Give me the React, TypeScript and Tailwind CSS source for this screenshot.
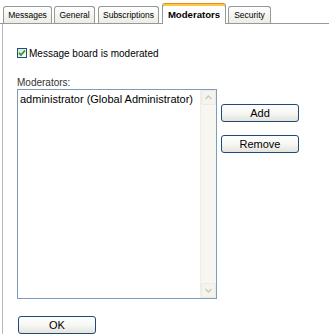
import React from "react";

const tabFont = { fontFamily: '"Liberation Sans", Arial, sans-serif' };

function Tab({ label, active, w, ml }: { label: string; active?: boolean; w: string; ml: string }) {
  if (active) {
    return (
      <div
        className={`${w} ${ml} h-[21px] -mb-px relative z-10 flex items-center justify-center bg-white border border-b-0 border-[#919b9c] border-t-[#e68b2c] rounded-t-[3px] shadow-[inset_0_2px_0_#ffc73c] text-[9.6px] font-bold text-black pt-[2px]`}
      >
        {label}
      </div>
    );
  }
  return (
    <div
      className={`${w} ${ml} h-[17px] flex items-center justify-center bg-gradient-to-b from-white to-[#ecebe4] border border-b-0 border-[#919b9c] rounded-t-[3px] text-[8.5px] text-black`}
    >
      {label}
    </div>
  );
}

function XpButton({ label, w }: { label: string; w: string }) {
  return (
    <div
      className={`${w} h-[18px] flex items-center justify-center border border-[#1d4a7a] rounded-[3px] bg-gradient-to-b from-white via-[#f7f7f4] to-[#e4e3dc] text-[11px] text-black`}
    >
      {label}
    </div>
  );
}

function Arrow({ up }: { up?: boolean }) {
  return (
    <div className="h-[15px] w-[15px] flex items-center justify-center border border-[#ebeae3] rounded-[2px] bg-[#f4f3ee]">
      <svg width="7" height="5" viewBox="0 0 7 5">
        <path
          d={up ? "M0.5 4 L3.5 1 L6.5 4" : "M0.5 1 L3.5 4 L6.5 1"}
          fill="none"
          stroke="#c9c7ba"
          strokeWidth="1.3"
        />
      </svg>
    </div>
  );
}

export default function App() {
  return (
    <div className="w-[329px] h-[334px] bg-white overflow-hidden text-black" style={tabFont}>
      {/* tab strip */}
      <div className="h-[24px] flex items-end border-b border-[#919b9c] ml-[0px]">
        <Tab label="Messages" w="w-[49px]" ml="ml-[3px]" />
        <Tab label="General" w="w-[41px]" ml="ml-[2px]" />
        <Tab label="Subscriptions" w="w-[61px]" ml="ml-[3px]" />
        <Tab label="Moderators" active w="w-[64px]" ml="ml-[3px]" />
        <Tab label="Security" w="w-[43px]" ml="ml-[2px]" />
      </div>
      {/* panel */}
      <div className="ml-[2px] h-[310px] border-l border-[#b5b9ba] pl-[14px] pt-[24px]">
        <div className="flex items-start h-[12px]">
          <div className="w-[10px] h-[10px] border border-[#1c5180] bg-gradient-to-br from-[#dcdcd7] to-white flex items-center justify-center">
            <svg width="8" height="8" viewBox="0 0 8 8">
              <path d="M1 3.8 L3 6 L7 1.5" fill="none" stroke="#21a121" strokeWidth="1.8" />
            </svg>
          </div>
          <span className="ml-[2px] text-[10px] leading-[12px]">Message board is moderated</span>
        </div>
        <div className="mt-[17px] text-[10px] leading-[12px] text-[#333]">Moderators:</div>
        <div className="flex items-start">
          <div className="w-[200px] h-[210px] border border-[#7f9db9] flex bg-white">
            <div className="flex-1 pl-[2px] pt-[3px] text-[11px] leading-[13px]">
              administrator (Global Administrator)
            </div>
            <div className="w-[16px] h-full bg-[#f7f6f1] border-l border-[#eeede6] flex flex-col justify-between items-center py-[0px]">
              <Arrow up />
              <Arrow />
            </div>
          </div>
          <div className="ml-[4px] pt-[15px] flex flex-col gap-[13px]">
            <XpButton label="Add" w="w-[78px]" />
            <XpButton label="Remove" w="w-[78px]" />
          </div>
        </div>
        <div className="mt-[17px] ml-[1px]">
          <XpButton label="OK" w="w-[78px]" />
        </div>
      </div>
    </div>
  );
}
